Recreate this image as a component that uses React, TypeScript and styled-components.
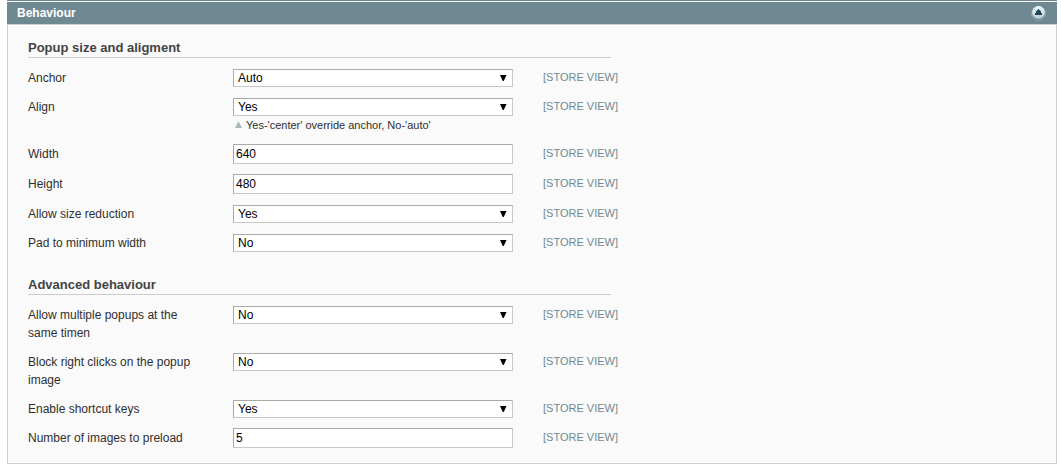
import React, { useState } from 'react';
import styled, { createGlobalStyle } from 'styled-components';

const GlobalStyle = createGlobalStyle`
  *, *::before, *::after { box-sizing: border-box; }
  body {
    margin: 0;
    background: #fff;
    color: #2f2f2f;
    font: 12px/18px "Liberation Sans", Arial, Helvetica, sans-serif;
  }
`;

const Page = styled.main`
  padding: 0 4px 5px 7px;
`;

const PreviousBar = styled.div`
  height: 1px;
  margin-bottom: 1px;
  background: #6f8992;
`;

const PanelHeader = styled.header`
  display: flex;
  align-items: center;
  justify-content: space-between;
  height: 22px;
  padding: 0 10px;
  background: #6f8992;
`;

const PanelTitle = styled.h2`
  margin: 0;
  color: #fff;
  font-size: 12px;
  line-height: 18px;
`;

const CollapseButton = styled.button`
  display: flex;
  padding: 0;
  border: 0;
  background: none;
  cursor: pointer;
`;

const PanelBody = styled.div`
  display: flex;
  flex-direction: column;
  gap: 20px;
  padding: 15px 20px 10px;
  border: 1px solid #d0d0d0;
  background: #fafafa;
`;

const Section = styled.section`
  max-width: 583px;
`;

const SectionTitle = styled.h3`
  margin: 0 0 5px;
  padding-bottom: 2px;
  border-bottom: 1px solid #ccc;
  color: #444;
  font-size: 13px;
  line-height: 15px;
`;

const Row = styled.div`
  display: grid;
  grid-template-columns: 175px 280px max-content;
  column-gap: 30px;
  align-items: start;
  padding: 5px 0;
`;

const Label = styled.label`
  padding-top: 1px;
`;

const SelectCell = styled.div`
  padding-top: 1px;
`;

const SelectBox = styled.div`
  position: relative;
  height: 18px;
`;

const Select = styled.select`
  appearance: none;
  display: block;
  width: 100%;
  height: 18px;
  padding: 0 20px 0 4px;
  border: 1px solid;
  border-color: #aaa #c8c8c8 #c8c8c8 #aaa;
  border-radius: 0;
  background: #fff;
  color: #000;
  font: inherit;
  line-height: 16px;
`;

const SelectArrow = styled.svg`
  position: absolute;
  top: 6px;
  right: 6px;
  pointer-events: none;
`;

const TextInput = styled.input`
  display: block;
  width: 100%;
  height: 20px;
  padding: 0 2px;
  border: 1px solid;
  border-color: #aaa #c8c8c8 #c8c8c8 #aaa;
  border-radius: 0;
  background: #fff;
  color: #000;
  font: inherit;
`;

const Note = styled.p`
  display: flex;
  align-items: center;
  gap: 4px;
  margin: 0;
  padding-left: 2px;
  font-size: 11px;
`;

const Scope = styled.span`
  color: #6f8992;
  font-size: 11px;
`;

type Field = {
  id: string;
  label: string;
  value: string;
  kind: 'select' | 'text';
  options?: string[];
  note?: string;
};

const yesNo = ['Yes', 'No'];

const sections: { title: string; fields: Field[] }[] = [
  {
    title: 'Popup size and aligment',
    fields: [
      { id: 'anchor', label: 'Anchor', value: 'Auto', kind: 'select', options: ['Auto'] },
      {
        id: 'align',
        label: 'Align',
        value: 'Yes',
        kind: 'select',
        options: yesNo,
        note: "Yes-'center' override anchor, No-'auto'",
      },
      { id: 'width', label: 'Width', value: '640', kind: 'text' },
      { id: 'height', label: 'Height', value: '480', kind: 'text' },
      { id: 'reduce', label: 'Allow size reduction', value: 'Yes', kind: 'select', options: yesNo },
      { id: 'pad', label: 'Pad to minimum width', value: 'No', kind: 'select', options: yesNo },
    ],
  },
  {
    title: 'Advanced behaviour',
    fields: [
      { id: 'multiple', label: 'Allow multiple popups at the same timen', value: 'No', kind: 'select', options: yesNo },
      { id: 'block', label: 'Block right clicks on the popup image', value: 'No', kind: 'select', options: yesNo },
      { id: 'keys', label: 'Enable shortcut keys', value: 'Yes', kind: 'select', options: yesNo },
      { id: 'preload', label: 'Number of images to preload', value: '5', kind: 'text' },
    ],
  },
];

function FieldRow({ field }: { field: Field }) {
  return (
    <Row>
      <Label htmlFor={field.id}>{field.label}</Label>
      {field.kind === 'select' ? (
        <SelectCell>
          <SelectBox>
            <Select id={field.id} defaultValue={field.value}>
              {field.options?.map((option) => (
                <option key={option}>{option}</option>
              ))}
            </Select>
            <SelectArrow width="7" height="6" viewBox="0 0 7 6" aria-hidden="true">
              <path d="M0 0H6.5L3.75 6H2.75Z" fill="#000" />
            </SelectArrow>
          </SelectBox>
          {field.note && (
            <Note>
              <svg width="7" height="6" viewBox="0 0 7 6" aria-hidden="true">
                <path d="M3 0H4L7 6H0Z" fill="#a9babf" />
              </svg>
              {field.note}
            </Note>
          )}
        </SelectCell>
      ) : (
        <TextInput id={field.id} type="text" defaultValue={field.value} />
      )}
      <Scope>[STORE VIEW]</Scope>
    </Row>
  );
}

export default function App() {
  const [open, setOpen] = useState(true);
  return (
    <>
      <GlobalStyle />
      <Page>
        <PreviousBar />
        <PanelHeader>
          <PanelTitle>Behaviour</PanelTitle>
          <CollapseButton type="button" aria-label="Toggle section" aria-expanded={open} onClick={() => setOpen(!open)}>
            <svg width="16" height="16" viewBox="0 0 16 16" aria-hidden="true">
              <defs>
                <linearGradient id="knob" x1="0" y1="0" x2="0" y2="1">
                  <stop offset="0" stopColor="#f4f8f9" />
                  <stop offset="1" stopColor="#b4cad0" />
                </linearGradient>
              </defs>
              <circle cx="7.5" cy="8.5" r="7" fill="#65808a" stroke="#90a5ad" />
              <circle cx="7.5" cy="7.5" r="6.5" fill="url(#knob)" />
              <path d="M7 4H8V5H9V6H10V8H11V10H4V8H5V6H6V5H7Z" fill="#1c4a5a" />
            </svg>
          </CollapseButton>
        </PanelHeader>
        {open && (
          <PanelBody>
            {sections.map((section) => (
              <Section key={section.title}>
                <SectionTitle>{section.title}</SectionTitle>
                {section.fields.map((field) => (
                  <FieldRow key={field.id} field={field} />
                ))}
              </Section>
            ))}
          </PanelBody>
        )}
      </Page>
    </>
  );
}
